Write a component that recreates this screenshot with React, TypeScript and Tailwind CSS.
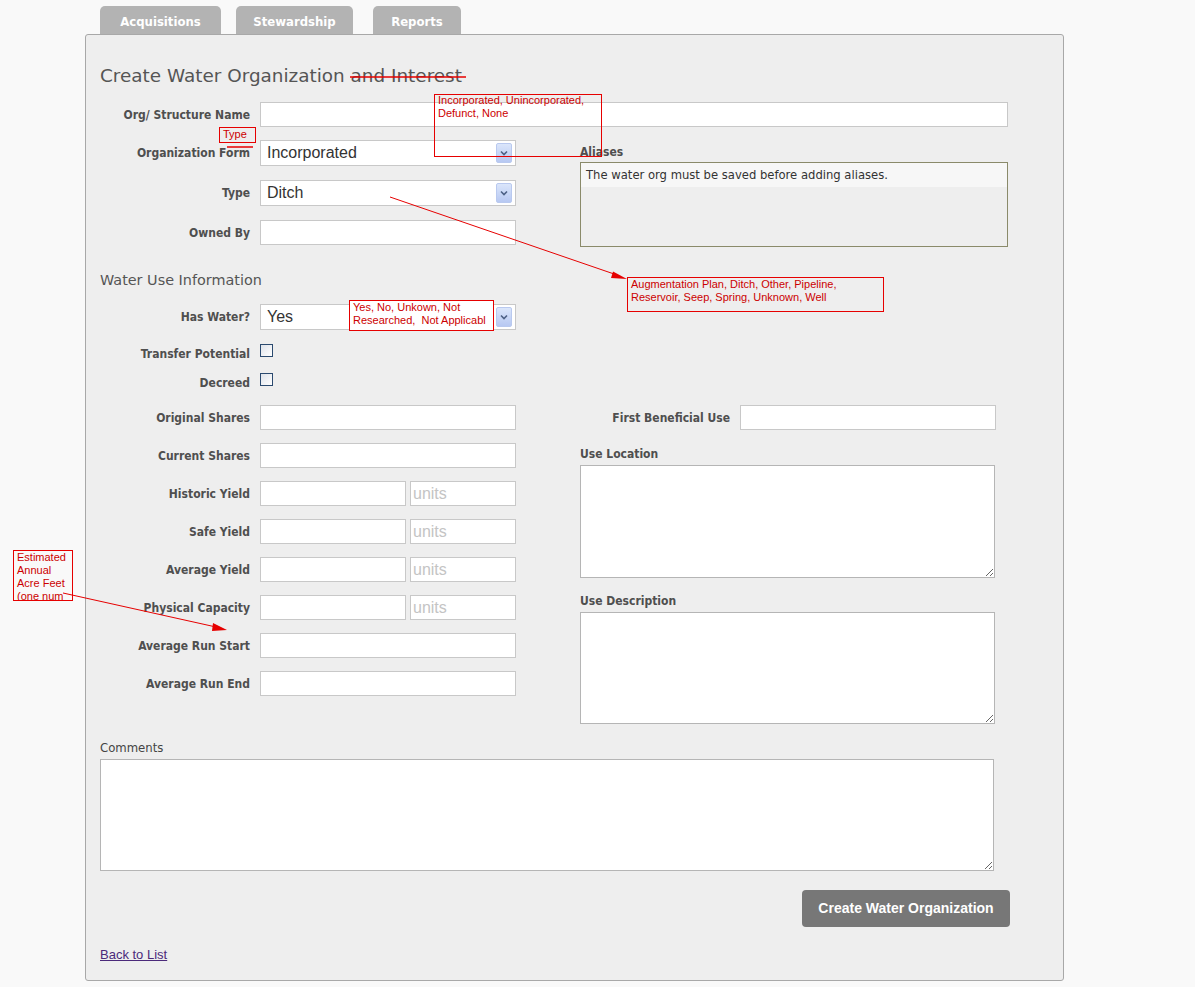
import React from "react";

const labelCls =
  "w-[150px] shrink-0 text-right text-[12px] leading-[16px] font-bold text-[#4f4f4f] [font-family:'DejaVu_Sans_Condensed','DejaVu_Sans',sans-serif]";
const inputCls = "h-[25px] bg-white border border-[#c8c8c8]";
const sans = "[font-family:'Liberation_Sans',Arial,sans-serif]";

function SelectArrow() {
  return (
    <div className="mr-[3px] flex h-[20px] w-[16px] items-center justify-center rounded-[2px] border border-[#b9c9ef] bg-gradient-to-b from-[#dbe6fb] to-[#b7c8f2]">
      <svg width="8" height="6" viewBox="0 0 8 6">
        <path d="M1 1.5 L4 4.5 L7 1.5" fill="none" stroke="#4d6185" strokeWidth="1.6" />
      </svg>
    </div>
  );
}

function FakeSelect({ value }: { value: string }) {
  return (
    <div className="flex h-[26px] w-[256px] items-center justify-between border border-[#c8c8c8] bg-white">
      <span className={`pl-[6px] text-[16px] text-[#333] ${sans}`}>{value}</span>
      <SelectArrow />
    </div>
  );
}

function Field({ label, children }: { label: string; children: React.ReactNode }) {
  return (
    <div className="flex items-center gap-[10px]">
      <div className={labelCls}>{label}</div>
      {children}
    </div>
  );
}

function Units() {
  return (
    <div className="flex gap-[4px]">
      <div className={`${inputCls} w-[146px]`} />
      <div className={`${inputCls} flex w-[106px] items-center pl-[2px] text-[16px] text-[#c4c4c4] ${sans}`}>units</div>
    </div>
  );
}

function Checkbox() {
  return <div className="h-[13px] w-[13px] border border-[#2b4a6f] bg-gradient-to-br from-[#dfe3ea] to-white" />;
}

// note text only; the red frames are drawn in the svg overlay
function Note({ className, lines }: { className: string; lines: string[] }) {
  return (
    <div className={`absolute overflow-hidden px-[4px] pt-[1px] text-[11px] leading-[13px] text-[#cc0000] ${sans} ${className}`}>
      {lines.map((l) => (
        <div key={l} className="whitespace-pre">
          {l}
        </div>
      ))}
    </div>
  );
}

export default function App() {
  return (
    <div className="relative min-h-[987px] bg-[#f9f9f9] pl-[85px] pt-[6px]">
      <div className="ml-[15px] flex text-[13px] font-bold text-white [font-family:'DejaVu_Sans_Condensed','DejaVu_Sans',sans-serif]">
        <div className="flex h-[28px] w-[121px] items-center justify-center rounded-t-[5px] bg-[#b3b3b3] pt-[3px]">Acquisitions</div>
        <div className="ml-[15px] flex h-[28px] w-[117px] items-center justify-center rounded-t-[5px] bg-[#b3b3b3] pt-[3px]">Stewardship</div>
        <div className="ml-[20px] flex h-[28px] w-[88px] items-center justify-center rounded-t-[5px] bg-[#b3b3b3] pt-[3px]">Reports</div>
      </div>

      <div className="h-[947px] w-[979px] rounded-[3px] border border-[#a8a8a8] bg-[#eeeeee] px-[14px]">
        <h1 className="mt-[29px] text-[18.4px] leading-[24px] text-[#555] [font-family:'DejaVu_Sans',sans-serif]">
          Create Water Organization and Interest
        </h1>

        <div className="mt-[14px]">
          <Field label="Org/ Structure Name">
            <div className={`${inputCls} w-[748px]`} />
          </Field>
        </div>

        <div className="mt-[13px] flex">
          <div className="flex w-[416px] flex-col gap-[14px]">
            <Field label="Organization Form">
              <FakeSelect value="Incorporated" />
            </Field>
            <Field label="Type">
              <FakeSelect value="Ditch" />
            </Field>
            <Field label="Owned By">
              <div className={`${inputCls} h-[24px] w-[256px]`} />
            </Field>
          </div>
          <div className="ml-[64px] pt-[4px]">
            <div className="text-[12px] leading-[16px] font-bold text-[#4f4f4f] [font-family:'DejaVu_Sans_Condensed','DejaVu_Sans',sans-serif]">
              Aliases
            </div>
            <div className="mt-[2px] h-[85px] w-[428px] border border-[#8a8a6a] bg-[#eeeeee]">
              <div className="h-[24px] bg-[#f7f7f7] pl-[5px] text-[11.6px] leading-[24px] text-[#333] [font-family:'DejaVu_Sans',sans-serif]">
                The water org must be saved before adding aliases.
              </div>
            </div>
          </div>
        </div>

        <div className="mt-[23px] text-[14.4px] leading-[20px] text-[#555] [font-family:'DejaVu_Sans',sans-serif]">
          Water Use Information
        </div>

        <div className="mt-[14px]">
          <Field label="Has Water?">
            <FakeSelect value="Yes" />
          </Field>
        </div>

        <div className="mt-[14px] flex items-start gap-[10px]">
          <div className={`${labelCls} mt-[2px]`}>Transfer Potential</div>
          <Checkbox />
        </div>
        <div className="mt-[11px] flex items-start gap-[10px]">
          <div className={`${labelCls} mt-[2px]`}>Decreed</div>
          <Checkbox />
        </div>

        <div className="mt-[14px] flex">
          <div className="flex w-[416px] flex-col gap-[13px]">
            <Field label="Original Shares">
              <div className={`${inputCls} w-[256px]`} />
            </Field>
            <Field label="Current Shares">
              <div className={`${inputCls} w-[256px]`} />
            </Field>
            <Field label="Historic Yield">
              <Units />
            </Field>
            <Field label="Safe Yield">
              <Units />
            </Field>
            <Field label="Average Yield">
              <Units />
            </Field>
            <Field label="Physical Capacity">
              <Units />
            </Field>
            <Field label="Average Run Start">
              <div className={`${inputCls} w-[256px]`} />
            </Field>
            <Field label="Average Run End">
              <div className={`${inputCls} w-[256px]`} />
            </Field>
          </div>
          <div className="ml-[64px]">
            <Field label="First Beneficial Use">
              <div className={`${inputCls} w-[256px]`} />
            </Field>
            <div className="mt-[16px] text-[12px] leading-[16px] font-bold text-[#4f4f4f] [font-family:'DejaVu_Sans_Condensed','DejaVu_Sans',sans-serif]">
              Use Location
            </div>
            <textarea className="mt-[3px] block h-[113px] w-[415px] border border-[#b5b5b5] bg-white" />
            <div className="mt-[15px] text-[12px] leading-[16px] font-bold text-[#4f4f4f] [font-family:'DejaVu_Sans_Condensed','DejaVu_Sans',sans-serif]">
              Use Description
            </div>
            <textarea className="mt-[3px] block h-[112px] w-[415px] border border-[#b5b5b5] bg-white" />
          </div>
        </div>

        <div className="mt-[16px] text-[13px] leading-[16px] text-[#444] [font-family:'DejaVu_Sans_Condensed',sans-serif]">
          Comments
        </div>
        <textarea className="mt-[3px] block h-[112px] w-[894px] border border-[#b5b5b5] bg-white" />

        <div className="mt-[19px] flex justify-end pr-[39px]">
          <button className={`h-[37px] w-[208px] whitespace-nowrap rounded-[4px] bg-[#777777] text-[14px] font-bold text-white ${sans}`}>
            Create Water Organization
          </button>
        </div>

        <a href="#" className={`mt-[20px] inline-block text-[13px] leading-[16px] text-[#4b2a7a] underline ${sans}`}>
          Back to List
        </a>
      </div>

      {/* review annotations */}
      <div className="absolute left-[349px] top-[300px] h-[31px] w-[145px] bg-white" />
      <Note className="left-[219px] top-[127px] h-[16px] w-[37px] !pt-0 leading-[14px]" lines={["Type"]} />
      <Note className="left-[434px] top-[94px] h-[63px] w-[168px] !pt-0" lines={["Incorporated, Unincorporated,", "Defunct, None"]} />
      <Note
        className="left-[627px] top-[277px] h-[35px] w-[257px]"
        lines={["Augmentation Plan, Ditch, Other, Pipeline,", "Reservoir, Seep, Spring, Unknown, Well"]}
      />
      <Note className="left-[349px] top-[300px] h-[31px] w-[145px]" lines={["Yes, No, Unkown, Not", "Researched,  Not Applicabl"]} />
      <Note className="left-[13px] top-[550px] h-[51px] w-[60px] leading-[12px]" lines={["Estimated", "Annual", "Acre Feet", "(one num"]} />

      <svg className="pointer-events-none absolute left-0 top-0" width="1195" height="987">
        <g fill="none" stroke="#e60000" strokeWidth="1">
          <rect x="219.5" y="127.5" width="36" height="15" />
          <rect x="434.5" y="94.5" width="167" height="62" />
          <rect x="627.5" y="277.5" width="256" height="34" />
          <rect x="349.5" y="300.5" width="144" height="30" />
          <rect x="13.5" y="550.5" width="59" height="50" />
        </g>
        <line x1="350" y1="77" x2="466" y2="77" stroke="#e60000" strokeWidth="1.5" />
        <line x1="227" y1="147" x2="253" y2="147" stroke="#e60000" strokeWidth="1.5" />
        <line x1="390" y1="197" x2="617" y2="275" stroke="#e60000" strokeWidth="1" />
        <polygon points="627,279 613,271.5 611,278" fill="#e60000" />
        <line x1="63" y1="593" x2="216" y2="627" stroke="#e60000" strokeWidth="1" />
        <polygon points="227,630 213,623 212,631" fill="#e60000" />
      </svg>
    </div>
  );
}
